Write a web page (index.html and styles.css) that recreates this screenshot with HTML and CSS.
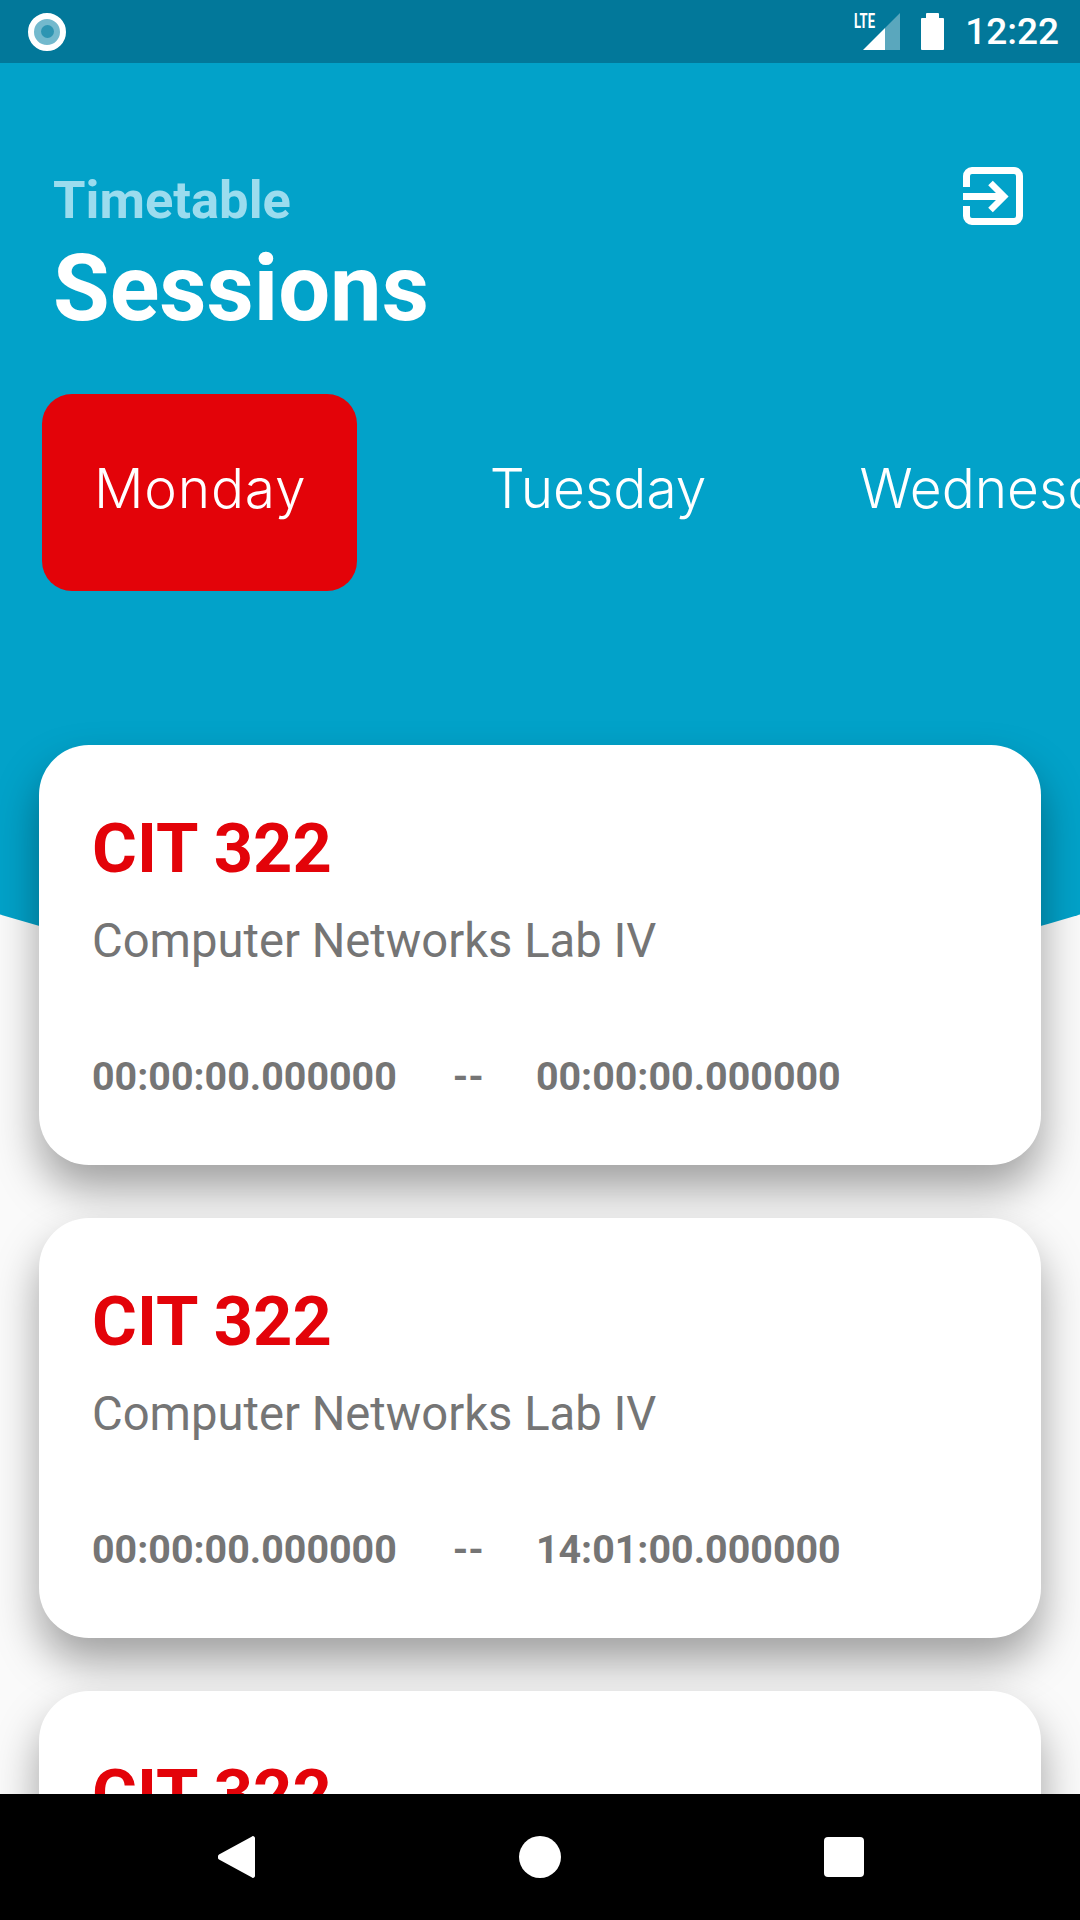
FILE: index.html
```html
<!DOCTYPE html>
<html lang="en">
<head>
  <meta charset="UTF-8" />
  <meta name="viewport" content="width=device-width, initial-scale=1.0"/>
  <title>Sessions</title>
  <link rel="stylesheet" href="styles.css">
</head>
<body>
  <div class="phone">
    <div class="status-bar">
      <div class="status-dot"><span></span></div>
      <div class="status-right">
        <div class="signal">
          <span class="lte">LTE</span>
          <svg width="37" height="37" viewBox="0 0 37 37">
            <path d="M37 0V37H22V15Z" fill="#fff" opacity="0.35"/>
            <path d="M22 15V37H0Z" fill="#fff"/>
          </svg>
        </div>
        <svg class="battery" width="23" height="37" viewBox="0 0 23 37">
          <path d="M5 5V1a1 1 0 0 1 1-1h11a1 1 0 0 1 1 1v4h4a1 1 0 0 1 1 1v30a1 1 0 0 1-1 1H1a1 1 0 0 1-1-1V6a1 1 0 0 1 1-1z" fill="#fff"/>
        </svg>
        <span class="clock">12:22</span>
      </div>
    </div>

    <div class="screen">
      <div class="backdrop"></div>

      <div class="header">
        <div class="titles">
          <div class="eyebrow">Timetable</div>
          <h1>Sessions</h1>
        </div>
        <svg class="exit-icon" width="60" height="58" viewBox="0 0 60 58">
          <path d="M3.500 20V9a5.500 5.500 0 0 1 5.500-5.500h42a5.500 5.500 0 0 1 5.500 5.500v40a5.500 5.500 0 0 1-5.500 5.500H9a5.500 5.500 0 0 1-5.500-5.500V39" fill="none" stroke="#fff" stroke-width="7"/>
          <path d="M0 29.500H40" fill="none" stroke="#fff" stroke-width="7"/>
          <path d="M27.500 16L41 29.500L27.500 43" fill="none" stroke="#fff" stroke-width="6.500"/>
        </svg>
      </div>

      <div class="tabs">
        <div class="tab tab-active">Monday</div>
        <div class="tab">Tuesday</div>
        <div class="tab">Wednesday</div>
        <div class="tab">Thursday</div>
      </div>

      <div class="cards">
        <div class="card">
          <div class="code">CIT 322</div>
          <div class="course">Computer Networks Lab IV</div>
          <div class="times"><span class="time">00:00:00.000000</span><span class="dash">--</span><span class="time">00:00:00.000000</span></div>
        </div>
        <div class="card">
          <div class="code">CIT 322</div>
          <div class="course">Computer Networks Lab IV</div>
          <div class="times"><span class="time">00:00:00.000000</span><span class="dash">--</span><span class="time">14:01:00.000000</span></div>
        </div>
        <div class="card">
          <div class="code">CIT 322</div>
          <div class="course">Computer Networks Lab IV</div>
          <div class="times"><span class="time">00:00:00.000000</span><span class="dash">--</span><span class="time">14:01:00.000000</span></div>
        </div>
      </div>
    </div>

    <div class="nav-bar">
      <svg width="37" height="42" viewBox="0 0 37 42">
        <path d="M37 2V40a2 2 0 0 1-3.400 1.300L1 23.500a3.500 3.500 0 0 1 0-5L33.600 0.700A2 2 0 0 1 37 2Z" fill="#fff"/>
      </svg>
      <div class="nav-home"></div>
      <div class="nav-recent"></div>
    </div>
  </div>
</body>
</html>
```

FILE: styles.css
```css
body {
  margin: 0;
  font-family: 'Roboto', sans-serif;
  background: #fafafa;
}
.phone {
  width: 1080px;
  height: 1920px;
  display: flex;
  flex-direction: column;
  overflow: hidden;
}

/* status bar */
.status-bar {
  height: 63px;
  flex: none;
  background: #02789a;
  display: flex;
  align-items: center;
  justify-content: space-between;
  padding: 0 21px 0 28px;
  position: relative;
  z-index: 2;
}
.status-dot {
  width: 38px;
  height: 38px;
  box-sizing: border-box;
  border: 6px solid #fff;
  border-radius: 50%;
  background: #73b9cd;
  display: flex;
  align-items: center;
  justify-content: center;
}
.status-dot span {
  width: 13px;
  height: 13px;
  border-radius: 50%;
  background: #2d95b2;
}
.status-right {
  display: flex;
  align-items: center;
}
.signal {
  position: relative;
  width: 37px;
  height: 37px;
  margin-right: 21px;
}
.signal svg, .battery {
  display: block;
}
.lte {
  position: absolute;
  left: -9px;
  top: -2px;
  font-size: 20px;
  line-height: 20px;
  font-weight: 700;
  color: #fff;
  transform: scaleX(0.65);
  transform-origin: left;
}
.battery {
  margin-right: 21px;
}
.clock {
  color: #fff;
  font-size: 37px;
  font-weight: 500;
  line-height: 37px;
}

/* blue area with curved bottom */
.screen {
  flex: 1;
  position: relative;
  overflow: hidden;
}
.backdrop {
  position: absolute;
  left: -1312px;
  right: -1312px;
  bottom: 799px;
  height: 3704px;
  background: #02a2c9;
  border-radius: 50%;
}
.header {
  position: relative;
  display: flex;
  justify-content: space-between;
  align-items: flex-start;
  padding: 104px 57px 0 53px;
}
.titles {
  margin-top: 5px;
}
.eyebrow {
  font-size: 52.500px;
  line-height: 56px;
  font-weight: 700;
  color: #9bdcee;
}
h1 {
  margin: 16px 0 0;
  font-size: 92px;
  line-height: 90px;
  font-weight: 700;
  color: #fff;
}
.exit-icon {
  display: block;
}

/* day tabs */
.tabs {
  position: relative;
  display: flex;
  margin: 60px 0 0 42px;
  white-space: nowrap;
}
.tab {
  height: 197px;
  box-sizing: border-box;
  padding: 0 76.500px 9px;
  display: flex;
  align-items: center;
  font-family: 'Inter', sans-serif;
  font-weight: 300;
  font-size: 55px;
  color: #fff;
}
.tab-active {
  padding: 0 51px 9px 52px;
  margin-right: 56px;
  letter-spacing: 0.800px;
  background: #e30309;
  border-radius: 30px;
}

/* session cards */
.cards {
  position: relative;
  display: flex;
  flex-direction: column;
  gap: 53px;
  margin: 154px 39px 0;
}
.card {
  height: 420px;
  flex: none;
  box-sizing: border-box;
  padding: 64px 53px 0;
  background: #fff;
  border-radius: 50px;
  box-shadow: 0 24px 44px rgba(0, 0, 0, 0.36);
}
.code {
  font-size: 68.600px;
  line-height: 80px;
  font-weight: 700;
  color: #e30309;
}
.course {
  margin-top: 25px;
  font-size: 47.200px;
  line-height: 54px;
  color: #757575;
}
.times {
  display: flex;
  margin-top: 86px;
  font-size: 39.400px;
  line-height: 46px;
  font-weight: 700;
  color: #757575;
}
.dash {
  margin: 0 52px 0 56px;
}

/* bottom nav */
.nav-bar {
  height: 126px;
  flex: none;
  background: #000;
  position: relative;
  z-index: 2;
  display: flex;
  align-items: center;
  padding: 0 216px 0 218px;
  justify-content: space-between;
}
.nav-bar svg {
  display: block;
}
.nav-home {
  width: 42px;
  height: 42px;
  border-radius: 50%;
  background: #fff;
}
.nav-recent {
  width: 40px;
  height: 40px;
  border-radius: 4px;
  background: #fff;
}
```
